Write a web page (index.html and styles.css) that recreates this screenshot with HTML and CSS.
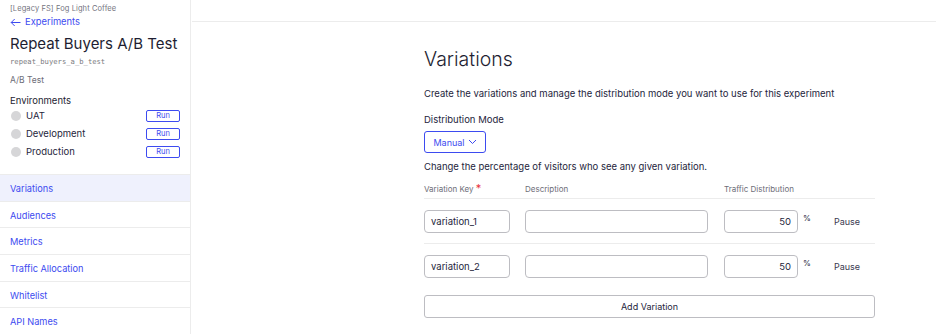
FILE: index.html
```html
<!DOCTYPE html>
<html>
<head>
<meta charset="utf-8">
<link rel="stylesheet" href="styles.css">
</head>
<body>
<div class="app">
  <aside class="sidebar">
    <div class="side-head">
      <div class="org">[Legacy FS] Fog Light Coffee</div>
      <a class="back"><svg width="11" height="9" viewBox="0 0 11 9"><path d="M10.5 4.5H1.2M4.7 1L1.2 4.5L4.7 8" fill="none" stroke="currentColor" stroke-width="1"/></svg>Experiments</a>
      <h1 class="title">Repeat Buyers A/B Test</h1>
      <div class="key">repeat_buyers_a_b_test</div>
      <div class="type">A/B Test</div>
      <div class="env-title">Environments</div>
      <div class="env"><span class="dot"></span><span class="env-name">UAT</span><button class="run">Run</button></div>
      <div class="env"><span class="dot"></span><span class="env-name">Development</span><button class="run">Run</button></div>
      <div class="env"><span class="dot"></span><span class="env-name">Production</span><button class="run">Run</button></div>
    </div>
    <nav class="nav">
      <a class="nav-item active">Variations</a>
      <a class="nav-item">Audiences</a>
      <a class="nav-item">Metrics</a>
      <a class="nav-item">Traffic Allocation</a>
      <a class="nav-item">Whitelist</a>
      <a class="nav-item">API Names</a>
    </nav>
  </aside>
  <main class="main">
    <div class="topbar"></div>
    <section class="content">
      <h2 class="heading">Variations</h2>
      <p class="desc">Create the variations and manage the distribution mode you want to use for this experiment</p>
      <div class="label">Distribution Mode</div>
      <button class="mode">Manual<svg width="9" height="6" viewBox="0 0 9 6"><path d="M1 1l3.5 3.5L8 1" fill="none" stroke="currentColor" stroke-width="1"/></svg></button>
      <p class="hint">Change the percentage of visitors who see any given variation.</p>
      <div class="table">
        <div class="row head">
          <div class="c-key">Variation Key <span class="req">*</span></div>
          <div class="c-desc">Description</div>
          <div class="c-traffic">Traffic Distribution</div>
        </div>
        <div class="row">
          <div class="c-key"><div class="input">variation_1</div></div>
          <div class="c-desc"><div class="input"></div></div>
          <div class="c-traffic"><div class="input num">50</div><span class="pct">%</span></div>
          <div class="c-act">Pause</div>
        </div>
        <div class="row">
          <div class="c-key"><div class="input">variation_2</div></div>
          <div class="c-desc"><div class="input"></div></div>
          <div class="c-traffic"><div class="input num">50</div><span class="pct">%</span></div>
          <div class="c-act">Pause</div>
        </div>
      </div>
      <button class="add">Add Variation</button>
    </section>
  </main>
</div>
</body>
</html>
```
FILE: styles.css
```css
* { box-sizing: border-box; }
html, body { margin: 0; padding: 0; }
body {
  font-family: Inter, "Noto Sans", sans-serif;
  color: #1e1e3c;
  background: #fff;
  width: 936px;
  height: 334px;
  overflow: hidden;
}
.app { display: flex; height: 334px; }
.sidebar {
  width: 191px;
  flex: none;
  border-right: 1px solid #ececec;
  display: flex;
  flex-direction: column;
}
.side-head { padding: 3px 10px 0 10px; height: 174px; flex: none; }
.org { font-size: 7.5px; color: #747480; line-height: 11px; letter-spacing: 0.1px; }
.back {
  display: flex; align-items: center; gap: 4px;
  font-size: 9.4px; color: #3d4bf0; line-height: 14px; margin-top: 1px;
}
.title {
  font-size: 15px; font-weight: 400; margin: 3px 0 0 0; line-height: 24px;
  color: #1e1e32; white-space: nowrap;
}
.key {
  font-family: "DejaVu Sans Mono", "Liberation Mono", monospace;
  font-size: 7.2px; color: #7a7a80; line-height: 12px;
}
.type { font-size: 8.5px; color: #6e6e78; margin-top: 6px; line-height: 12px; }
.env-title { font-size: 9.5px; color: #1e1e32; margin-top: 7.5px; line-height: 13px; }
.env { display: flex; align-items: center; height: 18px; }
.dot { width: 10px; height: 10px; border-radius: 50%; background: #d6d6d8; margin: 0 5px 0 1px; }
.env-name { font-size: 9.5px; color: #26263c; flex: 1; }
.run {
  width: 34px; height: 12px; padding: 0;
  border: 1px solid #3d4bf0; border-radius: 2px; background: #fff;
  font-family: inherit; font-size: 7.5px; color: #3d4bf0; line-height: 10px;
}
.nav { display: flex; flex-direction: column; border-top: 1px solid #ececec; }
.nav-item {
  height: 26.7px; display: flex; align-items: center;
  padding-left: 10px; font-size: 9.2px; color: #3d4bf0;
  border-bottom: 1px solid #ececec; padding-top: 1px;
}
.nav-item.active { background: #eff1fd; }
.main { flex: 1; display: flex; flex-direction: column; }
.topbar { height: 22px; border-bottom: 1px solid #ececec; margin-left: 1px; flex: none; }
.content { margin-left: 233px; width: 451px; padding-top: 25px; }
.heading { font-size: 19.5px; font-weight: 300; margin: 0; line-height: 24px; color: #1e1e32; }
.desc { font-size: 9.5px; margin: 17px 0 0 0; line-height: 12px; color: #1e1e3c; }
.label { font-size: 9.5px; margin-top: 14px; line-height: 12px; }
.mode {
  margin-top: 5px; height: 22px; width: 62px; padding: 0;
  display: flex; align-items: center; justify-content: center; gap: 3px;
  border: 1px solid #3d4bf0; border-radius: 3px; background: #fff;
  font-family: inherit; font-size: 9px; color: #3d4bf0;
}
.hint { font-size: 9.5px; margin: 8px 0 0 0; line-height: 12px; }
.table { margin-top: 6px; }
.row { display: flex; align-items: center; border-bottom: 1px solid #ececec; height: 45px; }
.row.head { height: 20px; font-size: 8px; color: #6e6e78; }
.row:last-child { border-bottom: none; }
.req { color: #e8333a; font-size: 11px; line-height: 8px; }
.c-key { width: 101px; flex: none; }
.c-desc { width: 199px; flex: none; }
.c-traffic { width: 110px; flex: none; display: flex; align-items: flex-start; }
.c-act { font-size: 9px; color: #3a3a50; }
.input {
  height: 23px; border: 1px solid #bdbdc2; border-radius: 4px;
  font-size: 9.5px; color: #1e1e3c; padding: 0 6px;
  display: flex; align-items: center;
}
.c-key .input { width: 86px; }
.c-desc .input { width: 183px; }
.c-traffic .input { width: 74px; justify-content: flex-end; }
.pct { font-size: 8px; margin-left: 5px; margin-top: 3px; }
.add {
  display: block; width: 451px; height: 23px; margin-top: 6px;
  border: 1px solid #bdbdc2; border-radius: 3px; background: #fff;
  font-family: inherit; font-size: 9px; color: #1e1e3c;
}
```
